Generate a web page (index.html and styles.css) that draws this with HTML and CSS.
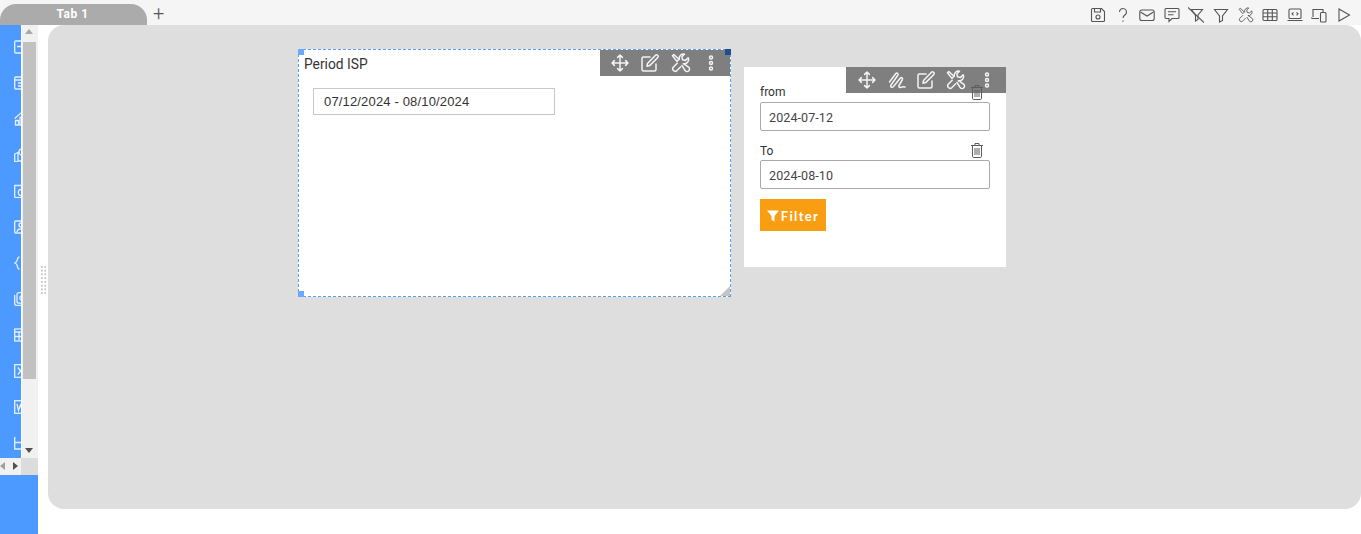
FILE: index.html
```html
<!DOCTYPE html>
<html lang="en">
<head>
<meta charset="utf-8">
<title>Dashboard</title>
<link rel="stylesheet" href="styles.css">
</head>
<body>
<svg class="defs" width="0" height="0" aria-hidden="true">
  <symbol id="i-move" viewBox="0 0 20 20"><path d="M10 2v16M2 10h16M7.600 4.400 10 2l2.400 2.400M7.600 15.600 10 18l2.400-2.400M4.400 7.600 2 10l2.400 2.400M15.600 7.600 18 10l-2.400 2.400"/></symbol>
  <symbol id="i-edit" viewBox="0 0 20 20"><path d="M16 11v5.500a1.500 1.500 0 0 1-1.500 1.500h-11A1.500 1.500 0 0 1 2 16.500v-11A1.500 1.500 0 0 1 3.500 4H10"/><path d="M7.500 10.500 15.500 2.200a1.400 1.400 0 0 1 2 0l.3.3a1.400 1.400 0 0 1 0 2l-8.100 8.100-2.700.6z"/></symbol>
  <symbol id="i-tools" viewBox="0 0 20 20"><path d="M8.300 6.200A4.300 4.300 0 0 1 13.500 1.200L10.900 3.800l.6 3 3 .6 2.700-2.600A4.300 4.300 0 0 1 12.300 10.700"/><path d="M6.200 10.200 2.200 14.300a2.500 2.500 0 0 0 3.500 3.500l4-4.100"/><path d="M1.500 2.800 2.800 1.500 8 6.300 5.900 8.400z"/><path d="M11 12.500 14.300 17.800a2.400 2.400 0 0 0 3.500-3.500L12.600 10.700"/></symbol>
  <symbol id="i-dots" viewBox="0 0 20 20"><circle cx="10" cy="4.500" r="1.500"/><circle cx="10" cy="10" r="1.500"/><circle cx="10" cy="15.500" r="1.500"/></symbol>
  <symbol id="i-sign" viewBox="0 0 20 20"><path d="M2.500 12 8.500 4c1.500-2 3.500-.5 2.200 1.500L4 15c-1.200 2 1 3.200 2.500 1.500L13 8.500c1.500-1.800 3.300-.3 2.200 1.500L12 15.500c-.8 1.800 1.500 2.500 3 1.500 1-.5 2-.3 3 0"/></symbol>
  <symbol id="i-trash" viewBox="0 0 14 16"><path d="M1 3.500h12M5 3.500V1.500h4v2M2.500 3.500v10.800c0 .7.500 1.200 1.200 1.200h6.600c.7 0 1.200-.5 1.200-1.200V3.500M5 6v7M7 6v7M9 6v7"/></symbol>
  <symbol id="i-save" viewBox="0 0 16 16"><path d="M2.500 1.500h9l3 3v9a1 1 0 0 1-1 1h-11a1 1 0 0 1-1-1v-11a1 1 0 0 1 1-1z"/><path d="M4.500 1.500v3.500h6V1.500"/><circle cx="8" cy="10" r="2"/></symbol>
  <symbol id="i-help" viewBox="0 0 16 16"><path d="M4.500 5a3.500 3.500 0 1 1 5.600 2.800C8.800 8.800 8 9.500 8 11M8 13.500v1.300"/></symbol>
  <symbol id="i-mail" viewBox="0 0 16 16"><rect x=".8" y="3" width="14.400" height="10.500" rx="2"/><path d="m1.500 5 6.500 4 6.500-4"/></symbol>
  <symbol id="i-chat" viewBox="0 0 16 16"><path d="M2 1.500h12a1 1 0 0 1 1 1v8a1 1 0 0 1-1 1H8l-3 3v-3H2a1 1 0 0 1-1-1v-8a1 1 0 0 1 1-1z"/><path d="M4 4.800h8M4 7.800h5.500"/></symbol>
  <symbol id="i-nofilter" viewBox="0 0 16 16"><path d="M3.500 2.500h11L10 8v4.500l-2.500 1.500V8.500z"/><path d="M0 .5 16 15.500"/></symbol>
  <symbol id="i-filter" viewBox="0 0 16 16"><path d="M1.500 2.500h13L9.500 9v4.500L6.500 15V9z"/></symbol>
  <symbol id="i-table" viewBox="0 0 16 16"><rect x="1" y="2.500" width="14" height="11" rx="1"/><path d="M1 6h14M1 9.700h14M5.700 2.500v11M10.300 2.500v11"/></symbol>
  <symbol id="i-code" viewBox="0 0 16 16"><rect x="2" y="2" width="12" height="9.500" rx="1"/><path d="M.5 13.500h15M6.500 5.300 5 6.800l1.500 1.500M9.500 5.300 11 6.800 9.500 8.300"/></symbol>
  <symbol id="i-devices" viewBox="0 0 16 16"><path d="M8 11.500H1.500a1 1 0 0 1-1-1M2 10V2.500h10V5"/><rect x="9.500" y="5.500" width="5.500" height="9.500" rx="1"/></symbol>
  <symbol id="i-play" viewBox="0 0 16 16"><path d="M3 2v12l10.500-6z"/></symbol>
  <symbol id="i-form" viewBox="0 0 14 14"><rect x=".7" y="1" width="13" height="12" rx="1"/><path d="M3 6.500h11M7 3.500h7M7 9.500h7"/></symbol>
  <symbol id="i-list" viewBox="0 0 14 14"><rect x=".7" y="1" width="13" height="12" rx="1"/><path d="M.7 4h13M4 7h10M4 10h10"/></symbol>
  <symbol id="i-home" viewBox="0 0 14 14"><path d="M.7 6.500 7 1l6 5.500M1.500 13V8.500h3V13zM6 13V5.500h3V13z"/></symbol>
  <symbol id="i-map" viewBox="0 0 14 14"><path d="M.7 6 4 4.500V13l-3.300 1zM4 13h9M8 1a3 3 0 0 1 3 3c0 2-3 4-3 4S5 6 5 4a3 3 0 0 1 3-3z"/></symbol>
  <symbol id="i-report" viewBox="0 0 14 14"><path d="M.7 13.500V1.500h8"/><path d="M.7 13.500h13"/><circle cx="7.500" cy="8.500" r="3.200"/></symbol>
  <symbol id="i-image" viewBox="0 0 14 14"><rect x=".7" y="1" width="13" height="12" rx="1"/><circle cx="7" cy="5" r="2"/><path d="M3 12c.5-4 6-4 7 0"/></symbol>
  <symbol id="i-brace" viewBox="0 0 14 14"><path d="M5.500 .8C2.500.8 4.500 6 1 7c3.500 1 1.500 6.200 4.500 6.200"/></symbol>
  <symbol id="i-stack" viewBox="0 0 14 14"><path d="M.7 3v8.500c0 1 .8 2 2 2h9"/><rect x="3" y=".7" width="10" height="10.500" rx="2"/><circle cx="8" cy="6" r="2.200"/></symbol>
  <symbol id="i-table-side" viewBox="0 0 14 14"><rect x=".7" y="1" width="13" height="12"/><path d="M.7 4h13M5 4v9M.7 8.500h13"/></symbol>
  <symbol id="i-xls" viewBox="0 0 14 14"><rect x=".7" y=".7" width="13" height="12.600"/><path d="m4 3.500 5 7M9 3.500l-5 7"/></symbol>
  <symbol id="i-word" viewBox="0 0 14 14"><rect x=".7" y=".7" width="13" height="12.600"/><path d="m3 4 1.500 6.500L6.500 5l2 5.500L10 4"/></symbol>
  <symbol id="i-box" viewBox="0 0 14 14"><path d="M.7 1v12h13M.7 6.500h13"/></symbol>
</svg>

<div class="app">
  <header class="topbar">
    <div class="tabs">
      <div class="tab">Tab 1</div>
      <span class="tab-add">+</span>
    </div>
    <div class="tools">
      <svg class="tool"><use href="#i-save"/></svg>
      <svg class="tool"><use href="#i-help"/></svg>
      <svg class="tool"><use href="#i-mail"/></svg>
      <svg class="tool"><use href="#i-chat"/></svg>
      <svg class="tool"><use href="#i-nofilter"/></svg>
      <svg class="tool"><use href="#i-filter"/></svg>
      <svg class="tool"><use href="#i-tools"/></svg>
      <svg class="tool"><use href="#i-table"/></svg>
      <svg class="tool"><use href="#i-code"/></svg>
      <svg class="tool"><use href="#i-devices"/></svg>
      <svg class="tool"><use href="#i-play"/></svg>
    </div>
  </header>

  <div class="main">
    <aside class="sidebar">
      <div class="side-top">
        <div class="side-strip">
          <svg class="side-icon"><use href="#i-form"/></svg>
          <svg class="side-icon"><use href="#i-list"/></svg>
          <svg class="side-icon"><use href="#i-home"/></svg>
          <svg class="side-icon"><use href="#i-map"/></svg>
          <svg class="side-icon"><use href="#i-report"/></svg>
          <svg class="side-icon"><use href="#i-image"/></svg>
          <svg class="side-icon"><use href="#i-brace"/></svg>
          <svg class="side-icon"><use href="#i-stack"/></svg>
          <svg class="side-icon"><use href="#i-table-side"/></svg>
          <svg class="side-icon"><use href="#i-xls"/></svg>
          <svg class="side-icon"><use href="#i-word"/></svg>
          <svg class="side-icon"><use href="#i-box"/></svg>
        </div>
        <div class="vscroll">
          <span class="arrow arrow-up"></span>
          <div class="vtrack"><div class="vthumb"></div></div>
          <span class="arrow arrow-down"></span>
        </div>
      </div>
      <div class="hscroll">
        <div class="hbtns">
          <span class="arrow arrow-left"></span>
          <span class="arrow arrow-right"></span>
        </div>
        <div class="hcorner"></div>
      </div>
      <div class="side-foot"></div>
    </aside>

    <div class="gutter"><div class="grip"></div></div>

    <section class="canvas">
      <article class="widget widget-period">
        <div class="bar bar-period">
          <svg class="bar-icon"><use href="#i-move"/></svg>
          <svg class="bar-icon"><use href="#i-edit"/></svg>
          <svg class="bar-icon"><use href="#i-tools"/></svg>
          <svg class="bar-icon"><use href="#i-dots"/></svg>
        </div>
        <h2 class="period-title">Period ISP</h2>
        <div class="period-input">07/12/2024 - 08/10/2024</div>
        <span class="handle handle-tl"></span>
        <span class="handle handle-tr"></span>
        <span class="handle handle-bl"></span>
        <span class="handle-br"></span>
      </article>

      <article class="widget widget-filter">
        <div class="bar bar-filter">
          <svg class="bar-icon"><use href="#i-move"/></svg>
          <svg class="bar-icon"><use href="#i-sign"/></svg>
          <svg class="bar-icon"><use href="#i-edit"/></svg>
          <svg class="bar-icon"><use href="#i-tools"/></svg>
          <svg class="bar-icon bar-icon-end"><use href="#i-dots"/></svg>
        </div>
        <div class="field">
          <div class="field-head">
            <label class="field-label">from</label>
            <svg class="trash"><use href="#i-trash"/></svg>
          </div>
          <div class="field-input">2024-07-12</div>
        </div>
        <div class="field">
          <div class="field-head">
            <label class="field-label">To</label>
            <svg class="trash"><use href="#i-trash"/></svg>
          </div>
          <div class="field-input">2024-08-10</div>
        </div>
        <button class="filter-btn" type="button">
          <svg class="filter-icon" viewBox="0 0 12 12"><path d="M0 .5h12L7.500 6v5.500l-3-1.500V6z"/></svg>Filter
        </button>
      </article>
    </section>
  </div>
</div>
</body>
</html>
```
FILE: styles.css
```css
* { box-sizing: border-box; }
html, body { margin: 0; height: 100%; overflow: hidden; background: #fff; }
body { font-family: Roboto, "Liberation Sans", Arial, sans-serif; color: #333; }
.defs { position: absolute; }

.app { display: flex; flex-direction: column; height: 534px; }

.topbar { display: flex; justify-content: space-between; align-items: flex-start; height: 25px; background: #f5f5f5; flex: none; }
.tabs { display: flex; align-items: flex-end; height: 25px; }
.tab { width: 147px; height: 21px; background: #ababab; border-radius: 16px 16px 0 0; color: #fff; font: 700 12px/21px Roboto, sans-serif; text-align: center; letter-spacing: .5px; padding-right: 2px; }
.tab-add { align-self: flex-start; margin-left: 6px; color: #555; font: 300 20px/26px Roboto, sans-serif; width: 14px; }
.tools { display: flex; gap: 8.6px; padding: 7px 9px 0 0; }
.tool { width: 16px; height: 16px; fill: none; stroke: #555; stroke-width: 1.1; }

.main { display: flex; flex: 1; min-height: 0; }

.sidebar { width: 38px; flex: none; display: flex; flex-direction: column; }
.side-top { display: flex; height: 433px; }
.side-strip { width: 21px; background: #4c9aff; overflow: hidden; display: flex; flex-direction: column; gap: 22px; padding: 15px 0 0 14px; }
.side-icon { width: 14px; height: 14px; flex: none; fill: none; stroke: #e4f0ff; stroke-width: 1.3; }
.vscroll { position: relative; width: 17px; background: #f1f1f1; border-left: 1px solid #fff; padding: 17px 2px 0 1px; }
.vtrack { height: 337px; }
.vthumb { height: 100%; background: #c1c1c1; }

.arrow { position: absolute; width: 0; height: 0; border: 4px solid transparent; }
.arrow-up { top: 4px; left: 3px; border-top: 0; border-bottom: 5px solid #a8a8a8; }
.arrow-down { bottom: 5px; left: 3px; border-bottom: 0; border-top: 5px solid #505050; }
.arrow-left { left: 0; top: 4px; border-left: 0; border-right: 5px solid #a0a0a0; }
.arrow-right { left: 13px; top: 4px; border-right: 0; border-left: 5px solid #505050; }

.hscroll { display: flex; height: 17px; flex: none; }
.hbtns { position: relative; width: 21px; background: #f1f1f1; }
.hcorner { flex: 1; background: #dcdcdc; }
.side-foot { flex: 1; background: #4c9aff; }

.gutter { width: 10px; flex: none; display: flex; align-items: center; justify-content: center; }
.grip { width: 7px; height: 30px; background-image: radial-gradient(circle, #c4c4c4 1.1px, transparent 1.2px); background-size: 3.5px 3.75px; }

.canvas { position: relative; flex: 1; height: 484px; background: #dedede; border-radius: 16px; }

.widget { position: absolute; background: #fff; }
.widget-period { left: 250px; top: 24px; width: 433px; height: 248px; border: 1px dashed #5aa0f0; padding: 6px 5px 0; }
.widget-filter { left: 696px; top: 42px; width: 262px; height: 200px; padding: 16px 16px 0; }

.bar { position: absolute; top: 0; right: 0; height: 26px; background: #7f7f7f; display: flex; align-items: center; }
.bar-period { width: 130px; padding-left: 10px; gap: 10.3px; }
.bar-filter { width: 160px; padding-left: 11px; gap: 9.5px; }
.bar-icon { width: 20px; height: 20px; flex: none; fill: none; stroke: #f4f4f4; stroke-width: 1.5; stroke-linecap: round; stroke-linejoin: round; }
.bar-icon-end { margin-left: 2px; }

.period-title { margin: 0; font: 400 13.8px/17px Roboto, sans-serif; color: #333; }
.period-input { margin: 15px 0 0 9px; width: 242px; height: 27px; border: 1px solid #c8c8c8; padding-left: 10px; font: 400 13px/25px "Liberation Sans", Arial, sans-serif; letter-spacing: .16px; color: #333; }

.handle { position: absolute; width: 6px; height: 6px; background: #6aa9ff; }
.handle-tl { left: -1px; top: -1px; }
.handle-tr { right: -1px; top: -1px; background: #1f4e8c; }
.handle-bl { left: -1px; bottom: -1px; }
.handle-br { position: absolute; right: 0; bottom: 0; width: 0; height: 0; border-style: solid; border-width: 0 0 10px 10px; border-color: transparent transparent #c4c4c4 transparent; }

.field { position: relative; margin-bottom: 10px; }
.field-head { display: flex; justify-content: space-between; align-items: center; height: 18px; margin-bottom: 1px; padding-right: 6px; }
.field-label { font: 400 12px/20px Roboto, sans-serif; color: #333; }
.field + .field .field-label { padding-top: 2px; }
.trash { position: relative; width: 14px; height: 16px; fill: none; stroke: #5c5c5c; stroke-width: 1; }
.field-input { width: 230px; height: 29px; border: 1px solid #aaa; border-radius: 2px; padding-left: 8px; font: 400 12.5px/29px Roboto, sans-serif; color: #444; letter-spacing: .1px; }

.filter-btn { display: flex; align-items: center; justify-content: center; gap: 2px; width: 66px; height: 32px; padding: 1px 0 0; border: 0; background: #f99d12; color: #fff; font: 700 13px Lato, sans-serif; letter-spacing: 1.3px; }
.filter-icon { width: 12px; height: 12px; fill: #fff; }
```
